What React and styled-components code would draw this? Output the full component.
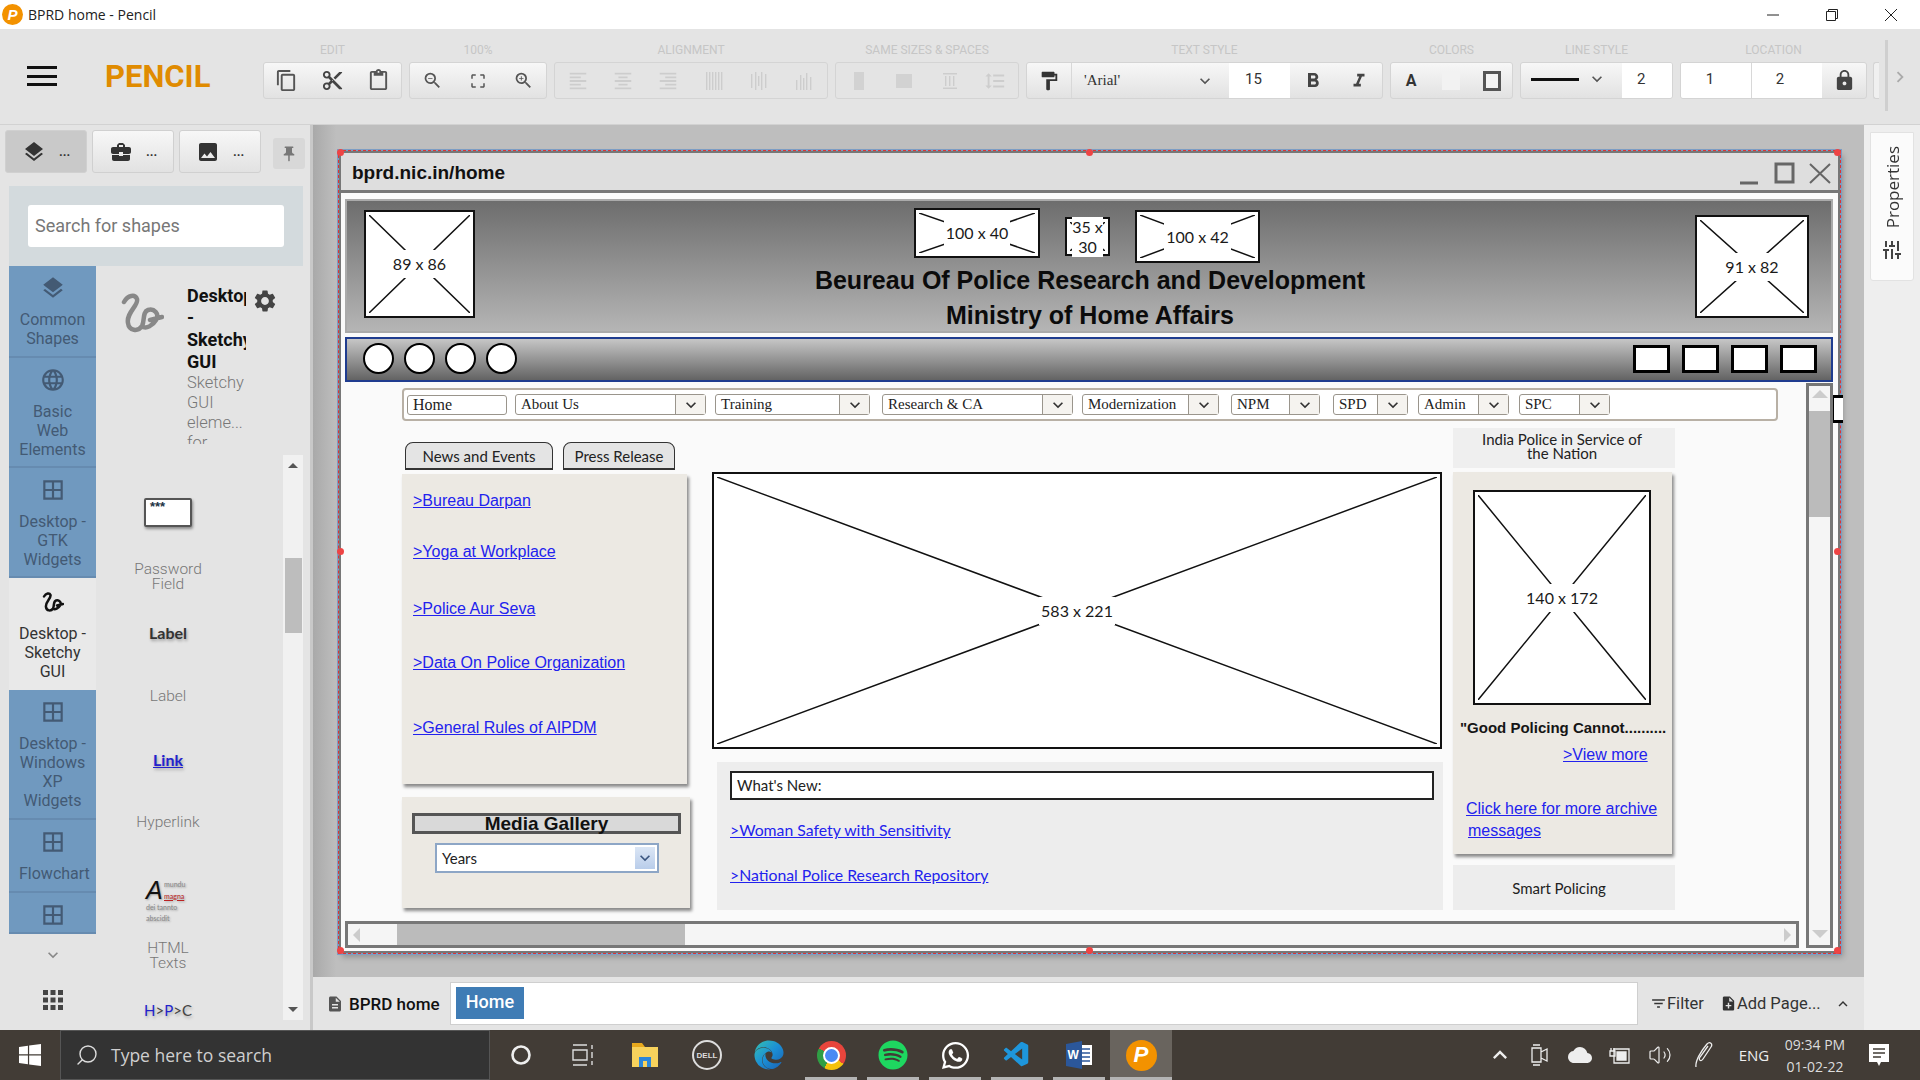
import React from "react"
import styled, { createGlobalStyle } from "styled-components"
import {
  MdContentCopy,
  MdContentCut,
  MdContentPaste,
  MdZoomOut,
  MdZoomIn,
  MdCropFree,
  MdFormatAlignLeft,
  MdFormatAlignCenter,
  MdFormatAlignRight,
  MdFormatBold,
  MdFormatItalic,
  MdFormatPaint,
  MdLock,
  MdLayers,
  MdBusinessCenter,
  MdImage,
  MdPushPin,
  MdLanguage,
  MdBorderAll,
  MdSettings,
  MdApps,
  MdKeyboardArrowDown,
  MdKeyboardArrowRight,
  MdKeyboardArrowUp,
  MdDescription,
  MdNoteAdd,
  MdFilterList,
  MdExpandLess,
  MdTune,
  MdCloud,
  MdFormatLineSpacing,
} from "react-icons/md"
import { FaSpotify, FaWhatsapp, FaEdge } from "react-icons/fa"
import { VscVscode } from "react-icons/vsc"
import { Search, Volume2 } from "lucide-react"

const GlobalStyle = createGlobalStyle`
  html, body { margin: 0; padding: 0; background: #fff; }
  * { box-sizing: border-box; }
`

const sketch = `"Lato", "Open Sans", sans-serif`
const arial = `"Liberation Sans", Arial, sans-serif`
const serif = `"Liberation Serif", "Times New Roman", serif`
const roboto = `Roboto, "Open Sans", sans-serif`

const Page = styled.div`
  width: 1920px;
  height: 1080px;
  overflow: hidden;
  display: flex;
  flex-direction: column;
  font-family: ${roboto};
  background: #e4e4e4;
`

/* window title */
const TitleBar = styled.div`
  height: 29px;
  background: #fff;
  display: flex;
  align-items: center;
  padding-left: 2px;
`

const LogoDot = styled.span`
  width: ${(p) => p.$size}px;
  height: ${(p) => p.$size}px;
  border-radius: 50%;
  background: #f39200;
  color: #fff;
  font: italic bold ${(p) => p.$size * 0.72}px ${arial};
  display: flex;
  align-items: center;
  justify-content: center;
`

const TitleText = styled.span`
  font: 14px "Open Sans", sans-serif;
  color: #222;
  margin-left: 5px;
  flex: 1;
`

const WinButton = styled.span`
  width: 59px;
  height: 29px;
  display: flex;
  align-items: center;
  justify-content: center;
`

/* toolbar */
const Toolbar = styled.div`
  height: 96px;
  background: #e4e4e4;
  display: flex;
  align-items: flex-start;
  border-bottom: 1px solid #d2d2d2;
`

const Burger = styled.div`
  width: 30px;
  margin: 37px 0 0 27px;
  height: 20px;
  display: flex;
  flex-direction: column;
  justify-content: space-between;
  span {
    height: 3px;
    background: #111;
  }
`

const Brand = styled.div`
  width: 158px;
  margin: 32px 0 0 48px;
  font: bold 31px ${roboto};
  color: #e08b00;
  line-height: 32px;
`

const GroupList = styled.div`
  display: flex;
  gap: 7px;
`

const GroupCol = styled.div`
  width: ${(p) => p.$w}px;
`

const GroupLabel = styled.div`
  height: 33px;
  padding-top: 15px;
  text-align: center;
  font: 12px/12px ${roboto};
  color: #c6c6c6;
  white-space: nowrap;
`

const GroupBox = styled.div`
  height: 37px;
  display: flex;
  border: 1px solid #d4d4d4;
  border-radius: 3px;
  overflow: hidden;
  background: ${(p) => (p.$off ? "#e4e4e4" : "linear-gradient(#f7f7f7, #e2e2e2)")};
  color: ${(p) => (p.$off ? "#cdcdcd" : "#4a4a4a")};
`

const Cell = styled.div`
  flex: ${(p) => (p.$w ? "none" : 1)};
  width: ${(p) => (p.$w ? `${p.$w}px` : "auto")};
  display: flex;
  align-items: center;
  justify-content: ${(p) => p.$justify || "center"};
  padding: ${(p) => p.$pad || 0};
  font: ${(p) => p.$font || `15px ${roboto}`};
  color: #333;
  background: ${(p) => (p.$white ? "#fff" : "transparent")};
  border-right: ${(p) => (p.$line ? "1px solid #d8d8d8" : "none")};
`

const OffIcon = styled.span`
  display: flex;
  color: #cdcdcd;
`

const Swatch = styled.span`
  width: ${(p) => p.$w}px;
  height: ${(p) => p.$h}px;
  background: ${(p) => p.$bg};
  border: ${(p) => p.$border || "none"};
`

const LineChevron = styled.span`
  display: flex;
  margin-left: 8px;
  color: #555;
`

const SideRule = styled.div`
  width: 3px;
  height: 71px;
  margin: 11px 0 0 6px;
  background: #cfcfcf;
`

const NextStub = styled.div`
  width: 6px;
  height: 37px;
  margin: 33px 0 0 6px;
  border: 1px solid #d4d4d4;
  border-right: none;
  border-radius: 3px 0 0 3px;
  background: #f0f0f0;
`

const NextArrow = styled.div`
  margin: 37px 0 0 1px;
  color: #aaa;
  display: flex;
`

/* body */
const Main = styled.div`
  flex: 1;
  display: flex;
  min-height: 0;
`

const LeftPanel = styled.div`
  width: 313px;
  background: #e4e4e4;
  border-right: 3px solid #c8c8c8;
`

const CollTabs = styled.div`
  display: flex;
  gap: 5px;
  padding: 5px 0 0 5px;
  height: 61px;
`

const CollTab = styled.div`
  width: 82px;
  height: 43px;
  border: 1px solid #d0d0d0;
  border-radius: 3px;
  background: ${(p) => (p.$on ? "#c9c9c9" : "linear-gradient(#f7f7f7, #e2e2e2)")};
  display: flex;
  align-items: center;
  padding-left: 16px;
  color: #333;
  gap: 13px;
  font: bold 13px ${roboto};
`

const PinBox = styled.div`
  width: 32px;
  height: 31px;
  margin: 8px 0 0 7px;
  border-radius: 3px;
  background: #d8d8d8;
  display: flex;
  align-items: center;
  justify-content: center;
  color: #777;
`

const SearchZone = styled.div`
  margin-left: 9px;
  width: 294px;
  height: 80px;
  background: #d3dadd;
  padding: 19px;
`

const SearchBox = styled.div`
  width: 256px;
  height: 42px;
  background: #fff;
  border-radius: 3px;
  padding-left: 7px;
  font: 18px/42px ${roboto};
  color: #777;
`

const PanelBody = styled.div`
  display: flex;
  margin-left: 9px;
`

const Rail = styled.div`
  width: 87px;
  display: flex;
  flex-direction: column;
  align-items: stretch;
`

const RailItem = styled.div`
  height: ${(p) => p.$h}px;
  background: ${(p) => (p.$on ? "#e9e9e9" : "#7099bf")};
  box-shadow: inset 0 -2px 0 rgba(70, 100, 130, ${(p) => (p.$on ? 0 : 0.25)});
  color: ${(p) => (p.$on ? "#333" : "#435a74")};
  padding: ${(p) => (p.$on ? 13 : 9)}px 10px 0;
  text-align: center;
  font: 16px/19px ${roboto};
  overflow: hidden;
  svg {
    display: block;
    margin: 0 auto ${(p) => (p.$on ? 11 : 9)}px;
  }
`

const RailMore = styled.div`
  height: 41px;
  display: flex;
  align-items: center;
  justify-content: center;
  color: #888;
`

const RailGrid = styled.div`
  height: 50px;
  display: flex;
  align-items: center;
  justify-content: center;
  color: #444;
`

const PanelRight = styled.div`
  width: 207px;
`

const CollHead = styled.div`
  height: 189px;
  display: flex;
  padding: 19px 0 0 24px;
`

const CollIcon = styled.div`
  width: 67px;
  padding-top: 6px;
`

const CollText = styled.div`
  width: 59px;
  height: 159px;
  overflow: hidden;
`

const CollTitle = styled.div`
  font: bold 18px/22px ${roboto};
  color: #111;
  white-space: pre;
`

const CollDesc = styled.div`
  font: 300 16.5px/20px ${roboto};
  color: #777;
  white-space: pre;
`

const GearWrap = styled.div`
  color: #444;
  margin: 3px 0 0 6px;
`

const ShapeRow = styled.div`
  display: flex;
`

const ShapeList = styled.div`
  width: 144px;
  height: 565px;
  margin-right: 43px;
  display: flex;
  flex-direction: column;
  align-items: center;
`

const PasswordIcon = styled.div`
  width: 48px;
  height: 30px;
  margin-top: 43px;
  background: #fff;
  border: 2px solid #555;
  border-radius: 2px;
  box-shadow: 1px 2px 3px rgba(0, 0, 0, 0.4);
  padding-left: 4px;
  font: bold 13px/13px ${arial};
  color: #234;
`

const ShapeName = styled.div`
  margin-top: ${(p) => p.$top}px;
  font: 300 15.5px/15px ${roboto};
  color: #777;
  text-align: center;
`

const SketchLabel = styled.div`
  margin-top: ${(p) => p.$top}px;
  height: 20px;
  font: bold 16px/20px ${sketch};
  color: ${(p) => p.$color || "#333"};
  text-decoration: ${(p) => (p.$link ? "underline" : "none")};
  text-shadow: 1px 2px 3px rgba(0, 0, 0, 0.3);
`

const HtmlPreview = styled.div`
  width: 44px;
  height: 45px;
  margin-top: 49px;
  font: 7px/11px ${sketch};
  color: #888;
  text-shadow: 1px 1px 2px rgba(0, 0, 0, 0.3);
  display: grid;
  grid-template-columns: 18px 1fr;
  white-space: nowrap;
  b {
    grid-row: span 2;
    font: italic 25px/23px ${arial};
    color: #111;
  }
  em {
    font-style: normal;
  }
  i {
    font-style: normal;
    color: #b22;
    text-decoration: underline;
  }
  span {
    grid-column: span 2;
  }
`

const Crumbs = styled.div`
  margin-top: ${(p) => p.$top}px;
  height: 20px;
  font: 15px/20px ${sketch};
  color: #22c;
  text-shadow: 1px 2px 3px rgba(0, 0, 0, 0.25);
  span {
    color: #444;
  }
`

const PanelBar = styled.div`
  width: 20px;
  height: 565px;
  background: #f1f1f1;
  display: flex;
  flex-direction: column;
  align-items: center;
  justify-content: space-between;
  padding: 8px 0;
  position: relative;
`

const PanelThumb = styled.div`
  position: absolute;
  top: 103px;
  left: 2px;
  width: 17px;
  height: 75px;
  background: #bdbdbd;
`

const Tri = styled.span`
  width: 0;
  height: 0;
  border-left: ${(p) => p.$s}px solid transparent;
  border-right: ${(p) => p.$s}px solid transparent;
  border-${(p) => (p.$up ? "bottom" : "top")}: ${(p) => p.$s}px solid ${(p) => p.$c || "#555"};
`

const TriSide = styled.span`
  width: 0;
  height: 0;
  border-top: 7px solid transparent;
  border-bottom: 7px solid transparent;
  border-${(p) => (p.$left ? "right" : "left")}: 7px solid #ccc;
`

/* canvas */
const CanvasCol = styled.div`
  width: 1551px;
  display: flex;
  flex-direction: column;
`

const Canvas = styled.div`
  height: 852px;
  background: linear-gradient(90deg, #a9a9a9, #bebebe 1.5%, #bebebe);
  padding: 26px 0 0 26px;
`

const DrawWindow = styled.div`
  position: relative;
  width: 1501px;
  height: 802px;
  background: #fafafa;
  border: 2px solid #777;
  outline: 1px dashed #d33;
  box-shadow: 0 0 0 2px #7c9dc4, 3px 4px 6px rgba(0, 0, 0, 0.25);
`

const Handle = styled.span`
  position: absolute;
  left: ${(p) => p.$x}%;
  top: ${(p) => p.$y}%;
  width: 7px;
  height: 7px;
  margin: -4px;
  background: #ee4444;
  border-radius: 50%;
`

const SideHandle = styled.div`
  position: absolute;
  left: 1490px;
  top: 242px;
  width: 12px;
  height: 28px;
  background: #fff;
  border: 3px solid #000;
  border-right: none;
`

const WinTitle = styled.div`
  height: 40px;
  background: #dedede;
  border-bottom: 3px solid #777;
  display: flex;
  align-items: center;
  padding: 2px 6px 0 11px;
  font: bold 19px ${arial};
  color: #111;
`

const WinTitleText = styled.span`
  flex: 1;
`

const WinBody = styled.div`
  padding: 6px 5px 0 4px;
`

const Banner = styled.div`
  height: 134px;
  display: flex;
  align-items: flex-start;
  border: 2px solid #aaa;
  background: linear-gradient(#6d6d6d, #b5b5b5);
`

const BannerCenter = styled.div`
  flex: 1;
  padding-left: 10px;
`

const BannerImages = styled.div`
  height: 62px;
  display: flex;
  justify-content: center;
  align-items: flex-start;
  gap: 25px;
  padding-right: 6px;
`

const BannerHeading = styled.div`
  text-align: center;
  font: bold 25px/35px ${arial};
  color: #0b0b0b;
`

const Placeholder = styled.div`
  position: relative;
  flex: none;
  width: ${(p) => p.$w}px;
  height: ${(p) => p.$h}px;
  margin: ${(p) => p.$m || 0};
  background: #fff;
  border: 2px solid #111;
  display: flex;
  align-items: center;
  justify-content: center;
`

const CrossSvg = styled.svg`
  position: absolute;
  inset: 3px;
  width: calc(100% - 6px);
  height: calc(100% - 6px);
`

const PlaceLabel = styled.span`
  position: relative;
  background: #fff;
  padding: ${(p) => (p.$tight ? 0 : "5px 2px")};
  font: ${(p) => p.$size || 16}px/${(p) => p.$lh || 18}px ${sketch};
  color: #1a1a1a;
  text-align: center;
`

const Cross = () => (
  <CrossSvg viewBox="0 0 100 100" preserveAspectRatio="none">
    <path d="M0 0L100 100M100 0L0 100" stroke="#111" strokeWidth="1.5" vectorEffect="non-scaling-stroke" fill="none" />
  </CrossSvg>
)

const Image = ({ w, h, m, label, size, lh, tight }) => (
  <Placeholder $w={w} $h={h} $m={m}>
    <Cross />
    <PlaceLabel $size={size} $lh={lh} $tight={tight}>{label}</PlaceLabel>
  </Placeholder>
)

const NavStrip = styled.div`
  height: 45px;
  margin-top: 4px;
  border: 2px solid #1f3c8f;
  background: linear-gradient(#c6c6c6, #636363);
  display: flex;
  align-items: center;
  padding: 0 0 2px 16px;
`

const Circle = styled.span`
  width: 31px;
  height: 31px;
  border-radius: 50%;
  background: #fff;
  border: 2px solid #000;
  margin-right: 10px;
`

const SquareGroup = styled.div`
  margin-left: auto;
  display: flex;
  gap: 12px;
  padding-right: 14px;
`

const Square = styled.span`
  width: 37px;
  height: 28px;
  background: #fff;
  border: 3px solid #000;
`

const ScrollArea = styled.div`
  display: flex;
  gap: 7px;
  height: 566px;
  margin-top: 1px;
`

const PageCol = styled.div`
  width: 1455px;
`

const PageContent = styled.div`
  height: 538px;
  padding: 5px 0 0 57px;
  overflow: hidden;
`

const MenuBar = styled.div`
  width: 1376px;
  height: 33px;
  border: 2px solid #b8b0a5;
  border-radius: 4px;
  background: #fff;
  display: flex;
  align-items: center;
  padding-left: 3px;
`

const MenuHome = styled.div`
  width: 100px;
  height: 20px;
  margin-right: 8px;
  border: 1px solid #9a958c;
  border-radius: 3px;
  padding-left: 5px;
  font: 16px/18px ${serif};
  color: #222;
`

const MenuCombo = styled.div`
  width: ${(p) => p.$w}px;
  height: 21px;
  margin-right: ${(p) => p.$gap}px;
  flex: none;
  border: 1px solid #9a958c;
  border-radius: 3px;
  display: flex;
  font: 15px/19px ${serif};
  color: #222;
  span {
    flex: 1;
    padding-left: 5px;
    white-space: nowrap;
  }
  i {
    width: 30px;
    border-left: 1px solid #9a958c;
    background: #f5f3ef;
    display: flex;
    align-items: center;
    justify-content: center;
    color: #333;
  }
`

const Columns = styled.div`
  display: flex;
  margin-top: 7px;
`

const LeftCol = styled.div`
  width: 288px;
  padding-top: 14px;
  margin-right: 22px;
`

const Tabs = styled.div`
  display: flex;
  gap: 10px;
  padding-left: 3px;
  height: 32px;
`

const Tab = styled.div`
  width: ${(p) => p.$w}px;
  height: 28px;
  background: #e4e4e4;
  border: 1px solid #333;
  border-bottom: 2px solid #333;
  border-radius: 8px 8px 0 0;
  text-align: center;
  font: 15px/26px ${sketch};
  color: #222;
`

const NewsPanel = styled.div`
  width: 285px;
  height: 310px;
  background: #ece9e3;
  box-shadow: 2px 3px 3px rgba(0, 0, 0, 0.45);
  padding: 17px 0 0 11px;
  display: flex;
  flex-direction: column;
  align-items: flex-start;
`

const Anchor = styled.a`
  margin-top: ${(p) => p.$top || 0}px;
  margin-left: ${(p) => p.$left || 0}px;
  font: ${(p) => p.$size || 16}px/${(p) => p.$lh || 20}px ${(p) => p.$font || arial};
  color: #2222ee;
  text-decoration: underline;
`

const MediaPanel = styled.div`
  width: 288px;
  height: 111px;
  margin-top: 13px;
  background: #ece9e3;
  box-shadow: 2px 3px 3px rgba(0, 0, 0, 0.45);
  padding: 16px 0 0 10px;
`

const MediaHead = styled.div`
  width: 269px;
  height: 21px;
  background: #d9d9d9;
  border: 3px solid #555;
  text-align: center;
  font: bold 19px/15px ${arial};
  color: #111;
`

const SelectBox = styled.div`
  width: 224px;
  height: 30px;
  margin: 9px 0 0 23px;
  background: #fff;
  border: 2px solid #8da6c6;
  display: flex;
  align-items: center;
  justify-content: space-between;
  padding: 2px 2px 2px 5px;
  font: 15px ${sketch};
  color: #222;
`

const SelectBtn = styled.span`
  width: 20px;
  height: 100%;
  background: linear-gradient(#dbe6f5, #b9cdea);
  display: flex;
  align-items: center;
  justify-content: center;
  color: #3b5680;
`

const CenterCol = styled.div`
  width: 731px;
  padding-top: 44px;
  margin-right: 10px;
`

const NewsBox = styled.div`
  width: 726px;
  height: 148px;
  margin: 13px 0 0 5px;
  background: #ededed;
  padding: 9px 0 0 13px;
  display: flex;
  flex-direction: column;
  align-items: flex-start;
`

const WhatsNew = styled.div`
  width: 704px;
  height: 29px;
  background: #fff;
  border: 2px solid #222;
  padding-left: 5px;
  font: 15px/24px ${sketch};
  color: #222;
`

const RightCol = styled.div`
  width: 222px;
`

const CaptionBox = styled.div`
  height: ${(p) => p.$h}px;
  margin-top: ${(p) => p.$top || 0}px;
  background: ${(p) => p.$bg};
  display: flex;
  align-items: center;
  justify-content: center;
  text-align: center;
  font: 15px/14px ${sketch};
  color: #222;
  padding: 0 ${(p) => p.$right || 28}px ${(p) => p.$bottom || 0}px 24px;
`

const QuotePanel = styled.div`
  width: 219px;
  height: 382px;
  margin-top: 4px;
  background: #ece9e3;
  box-shadow: 2px 3px 3px rgba(0, 0, 0, 0.45);
  padding-top: 18px;
  display: flex;
  flex-direction: column;
  align-items: flex-start;
`

const Quote = styled.div`
  margin: 13px 0 0 7px;
  font: bold 15px/20px ${arial};
  color: #151515;
  white-space: nowrap;
`

const HScroll = styled.div`
  height: 27px;
  border: 3px solid #777;
  background: #f5f5f5;
  display: flex;
  align-items: center;
  padding-left: 5px;
`

const HThumb = styled.div`
  width: 288px;
  height: 100%;
  margin: 0 auto 0 37px;
  background: #bbb;
`

const HEnd = styled.div`
  margin-right: 5px;
  display: flex;
`

const VScroll = styled.div`
  width: 27px;
  height: 565px;
  border: 3px solid #777;
  background: #f5f5f5;
  display: flex;
  flex-direction: column;
  align-items: center;
  justify-content: space-between;
  padding: 4px 0 7px;
  position: relative;
`

const VThumb = styled.div`
  position: absolute;
  top: 25px;
  left: 0;
  right: 0;
  height: 106px;
  background: #bbb;
`

/* page tabs */
const PageBar = styled.div`
  height: 53px;
  background: #e4e4e4;
  display: flex;
  align-items: center;
  padding-left: 13px;
`

const DocName = styled.div`
  width: 124px;
  display: flex;
  align-items: center;
  gap: 5px;
  font: 500 17px ${roboto};
  color: #111;
  svg {
    color: #555;
  }
`

const PageTabs = styled.div`
  width: 1188px;
  height: 43px;
  background: #fff;
  border: 1px solid #cfcfcf;
  padding: 4px 5px;
`

const PageTab = styled.div`
  width: 68px;
  height: 32px;
  background: #3f7cb5;
  color: #fff;
  text-align: center;
  font: 500 18px/30px ${roboto};
`

const PageAction = styled.div`
  display: flex;
  align-items: center;
  margin-left: ${(p) => p.$left}px;
  font: 16.5px ${roboto};
  color: #333;
`

const RightDock = styled.div`
  flex: 1;
  background: #eeeeee;
  padding: 7px 0 0 6px;
`

const DockTab = styled.div`
  width: 44px;
  height: 149px;
  background: #fbfbfb;
  border: 1px solid #e2e2e2;
  border-radius: 0 0 3px 3px;
  display: flex;
  flex-direction: column;
  align-items: center;
  padding-top: 13px;
  color: #444;
  svg {
    transform: rotate(90deg);
  }
`

const DockLabel = styled.span`
  writing-mode: vertical-rl;
  transform: rotate(180deg);
  font: 17px "Open Sans", sans-serif;
  color: #333;
  margin-bottom: 10px;
`

/* taskbar */
const Taskbar = styled.div`
  height: 50px;
  background: #423c36;
  display: flex;
  align-items: stretch;
`

const StartBtn = styled.div`
  width: 60px;
  display: flex;
  align-items: center;
  justify-content: center;
`

const TaskSearch = styled.div`
  width: 430px;
  background: #333333;
  border: 1px solid #555;
  display: flex;
  align-items: center;
  padding-left: 14px;
  gap: 12px;
  font: 17.5px "Open Sans", sans-serif;
  color: #cfcfcf;
  svg {
    transform: scaleX(-1);
  }
`

const TaskApp = styled.div`
  width: 62px;
  position: relative;
  display: flex;
  align-items: center;
  justify-content: center;
  background: ${(p) => (p.$on ? "#69645e" : "transparent")};
  color: ${(p) => p.$color || "#fff"};
  &::after {
    content: "";
    display: ${(p) => (p.$open ? "block" : "none")};
    position: absolute;
    left: ${(p) => (p.$on ? 0 : 5)}px;
    right: ${(p) => (p.$on ? 0 : 5)}px;
    bottom: 0;
    height: 3px;
    background: #b4b4b4;
  }
`

const TrayArea = styled.div`
  margin-left: auto;
  display: flex;
  padding-right: 14px;
`

const TrayItem = styled.div`
  width: ${(p) => p.$w || 40}px;
  display: flex;
  align-items: center;
  justify-content: center;
  color: #eee;
  font: 15px "Open Sans", sans-serif;
`

const Clock = styled.div`
  width: 74px;
  text-align: center;
  padding-top: 4px;
  font: 14px/22px "Open Sans", sans-serif;
  color: #ddd;
`

const ChromeRing = styled.span`
  width: 29px;
  height: 29px;
  border-radius: 50%;
  background: conic-gradient(#e8453c 0deg 125deg, #f4c20d 125deg 210deg, #2f9e44 210deg 300deg, #e8453c 300deg);
  display: flex;
  align-items: center;
  justify-content: center;
  &::after {
    content: "";
    width: 13px;
    height: 13px;
    border-radius: 50%;
    background: #4a8af4;
    border: 2px solid #fff;
  }
`

const DellMark = styled.span`
  width: 30px;
  height: 30px;
  border-radius: 50%;
  border: 2px solid #ddd;
  display: flex;
  align-items: center;
  justify-content: center;
  font: bold 8px ${arial};
  color: #ddd;
`

const HiddenDefs = styled.svg`
  position: absolute;
`

const Squiggle = ({ size, color, width = 5 }) => (
  <svg width={size} height={size} viewBox="0 0 44 44" fill="none">
    <path
      d="M4 11C8 4 15 3 17 8C19 14 6 22 8 32C9 40 18 41 22 35C25 30 22 21 28 19C34 17 40 23 36 29C33 34 26 39 22 35M30 29L42 26"
      stroke={color}
      strokeWidth={width}
      strokeLinecap="round"
      strokeLinejoin="round"
    />
  </svg>
)

const Bars = ({ kind }) => (
  <svg width="20" height="20" viewBox="0 0 20 20" fill="#cdcdcd">
    {kind === "v" && <path d="M2 1h1.4v18H2zM5 1h1.4v18H5zM8 1h1.4v18H8zM11 1h1.4v18H11zM14 1h1.4v18H14zM17 1h1.4v18H17z" />}
    {kind === "c" && <path d="M2 3h1.4v14H2zM6 1h1.4v18H6zM9 5h1.4v10H9zM12 1h1.4v18H12zM16 3h1.4v14H16z" />}
    {kind === "b" && <path d="M2 9h1.4v10H2zM6 4h1.4v15H6zM9 7h1.4v12H9zM12 2h1.4v17H12zM16 6h1.4v13H16z" />}
    {kind === "h" && <path d="M5 1h10v18H5z" opacity=".8" />}
    {kind === "w" && <path d="M2 3h16v14H2z" opacity=".8" />}
    {kind === "s" && <path d="M3 2h14v1.4H3zM3 16.6h14V18H3zM5 5h1.4v10H5zM9 5h1.4v10H9zM13 5h1.4v10H13z" />}
  </svg>
)

const Group = ({ label, w, off, children }) => (
  <GroupCol $w={w}>
    <GroupLabel>{label}</GroupLabel>
    <GroupBox $off={off}>{children}</GroupBox>
  </GroupCol>
)

const railTop = [
  { h: 92, icon: <MdLayers size={26} />, text: "Common Shapes" },
  { h: 110, icon: <MdLanguage size={26} />, text: "Basic Web Elements" },
  { h: 110, icon: <MdBorderAll size={26} />, text: "Desktop - GTK Widgets" },
  { h: 112, icon: <Squiggle size={22} color="#111" width={5} />, text: "Desktop - Sketchy GUI", on: true },
  { h: 130, icon: <MdBorderAll size={26} />, text: "Desktop - Windows XP Widgets" },
  { h: 73, icon: <MdBorderAll size={26} />, text: "Flowchart" },
  { h: 41, icon: <MdBorderAll size={26} />, text: "" },
]

const menus = [
  { label: "About Us", w: 191, gap: 9 },
  { label: "Training", w: 155, gap: 12 },
  { label: "Research & CA", w: 191, gap: 9 },
  { label: "Modernization", w: 137, gap: 12 },
  { label: "NPM", w: 89, gap: 13 },
  { label: "SPD", w: 75, gap: 10 },
  { label: "Admin", w: 91, gap: 10 },
  { label: "SPC", w: 91, gap: 0 },
]

const newsLinks = [
  { text: ">Bureau Darpan", top: 0 },
  { text: ">Yoga at Workplace", top: 31 },
  { text: ">Police Aur Seva", top: 37 },
  { text: ">Data On Police Organization", top: 34 },
  { text: ">General Rules of AIPDM", top: 45 },
]

const handles = [
  [0, 0],
  [50, 0],
  [100, 0],
  [0, 50],
  [100, 50],
  [0, 100],
  [50, 100],
  [100, 100],
]

const App = () => {
  return (
    <Page>
      <GlobalStyle />
      <HiddenDefs width="0" height="0">
        <defs>
          <linearGradient id="edgeFill" x1="0" y1="0" x2="1" y2="1">
            <stop offset="0" stopColor="#35c1b0" />
            <stop offset="0.5" stopColor="#1b8fd6" />
            <stop offset="1" stopColor="#1b5fae" />
          </linearGradient>
        </defs>
      </HiddenDefs>

      <TitleBar>
        <LogoDot $size={21}>P</LogoDot>
        <TitleText>BPRD home - Pencil</TitleText>
        <WinButton>
          <svg width="12" height="12" viewBox="0 0 12 12"><path d="M0 6h12" stroke="#222" strokeWidth="1" /></svg>
        </WinButton>
        <WinButton>
          <svg width="12" height="12" viewBox="0 0 12 12" fill="none" stroke="#222"><path d="M.5 2.5h9v9h-9zM2.5 2.5v-2h9v9h-2" /></svg>
        </WinButton>
        <WinButton>
          <svg width="14" height="14" viewBox="0 0 14 14" stroke="#222"><path d="M1 1l12 12M13 1L1 13" /></svg>
        </WinButton>
      </TitleBar>

      <Toolbar>
        <Burger><span /><span /><span /></Burger>
        <Brand>PENCIL</Brand>
        <GroupList>
          <Group label="EDIT" w={139}>
            <Cell><MdContentCopy size={23} color="#555" /></Cell>
            <Cell><MdContentCut size={23} color="#444" /></Cell>
            <Cell><MdContentPaste size={23} color="#555" /></Cell>
          </Group>
          <Group label="100%" w={138}>
            <Cell><MdZoomOut size={21} color="#555" /></Cell>
            <Cell><MdCropFree size={18} color="#555" /></Cell>
            <Cell><MdZoomIn size={21} color="#555" /></Cell>
          </Group>
          <Group label="ALIGNMENT" w={274} off>
            <Cell><OffIcon><MdFormatAlignLeft size={22} /></OffIcon></Cell>
            <Cell><OffIcon><MdFormatAlignCenter size={22} /></OffIcon></Cell>
            <Cell><OffIcon><MdFormatAlignRight size={22} /></OffIcon></Cell>
            <Cell><Bars kind="v" /></Cell>
            <Cell><Bars kind="c" /></Cell>
            <Cell><Bars kind="b" /></Cell>
          </Group>
          <Group label="SAME SIZES & SPACES" w={184} off>
            <Cell><Bars kind="h" /></Cell>
            <Cell><Bars kind="w" /></Cell>
            <Cell><Bars kind="s" /></Cell>
            <Cell><OffIcon><MdFormatLineSpacing size={22} /></OffIcon></Cell>
          </Group>
          <Group label="TEXT STYLE" w={357}>
            <Cell $w={45} $line><MdFormatPaint size={22} color="#333" /></Cell>
            <Cell $w={157} $justify="space-between" $pad="0 14px 0 12px" $font={`15px ${serif}`}>
              'Arial'
              <MdKeyboardArrowDown size={20} color="#555" />
            </Cell>
            <Cell $w={61} $white $font={`15px ${roboto}`} $justify="flex-start" $pad="0 0 3px 16px">15</Cell>
            <Cell><MdFormatBold size={24} color="#444" /></Cell>
            <Cell><MdFormatItalic size={22} color="#444" /></Cell>
          </Group>
          <Group label="COLORS" w={123}>
            <Cell $font={`bold 16px ${roboto}`}>A</Cell>
            <Cell><Swatch $w={18} $h={19} $bg="#f2f2f2" /></Cell>
            <Cell><Swatch $w={18} $h={20} $bg="#f4f4f4" $border="3px solid #555" /></Cell>
          </Group>
          <Group label="LINE STYLE" w={153}>
            <Cell $w={101} $justify="flex-start" $pad="0 0 3px 10px">
              <Swatch $w={48} $h={3} $bg="#111" />
              <LineChevron><MdKeyboardArrowDown size={20} /></LineChevron>
            </Cell>
            <Cell $white $justify="flex-start" $pad="0 0 3px 15px">2</Cell>
          </Group>
          <Group label="LOCATION" w={187}>
            <Cell $w={71} $white $line $pad="0 12px 3px 0">1</Cell>
            <Cell $w={70} $white $pad="0 14px 3px 0">2</Cell>
            <Cell><MdLock size={23} color="#444" /></Cell>
          </Group>
        </GroupList>
        <NextStub />
        <SideRule />
        <NextArrow><MdKeyboardArrowRight size={22} /></NextArrow>
      </Toolbar>

      <Main>
        <LeftPanel>
          <CollTabs>
            <CollTab $on><MdLayers size={24} />...</CollTab>
            <CollTab><MdBusinessCenter size={24} />...</CollTab>
            <CollTab><MdImage size={24} />...</CollTab>
            <PinBox><MdPushPin size={18} /></PinBox>
          </CollTabs>
          <SearchZone>
            <SearchBox>Search for shapes</SearchBox>
          </SearchZone>
          <PanelBody>
            <Rail>
              {railTop.map((item, i) => (
                <RailItem key={i} $h={item.h} $on={item.on}>
                  {item.icon}
                  {item.text}
                </RailItem>
              ))}
              <RailMore><MdKeyboardArrowDown size={20} /></RailMore>
              <RailGrid><MdApps size={30} /></RailGrid>
            </Rail>
            <PanelRight>
              <CollHead>
                <CollIcon><Squiggle size={44} color="#888" width={4.5} /></CollIcon>
                <CollText>
                  <CollTitle>{"Desktop\n-\nSketchy\nGUI"}</CollTitle>
                  <CollDesc>{"Sketchy\nGUI\neleme...\nfor"}</CollDesc>
                </CollText>
                <GearWrap><MdSettings size={26} /></GearWrap>
              </CollHead>
              <ShapeRow>
                <ShapeList>
                  <PasswordIcon>***</PasswordIcon>
                  <ShapeName $top={35}>Password<br />Field</ShapeName>
                  <SketchLabel $top={31}>Label</SketchLabel>
                  <ShapeName $top={46}>Label</ShapeName>
                  <SketchLabel $top={46} $link $color="#22c">Link</SketchLabel>
                  <ShapeName $top={45}>Hyperlink</ShapeName>
                  <HtmlPreview>
                    <b>A</b>
                    <em>mundu</em>
                    <i>magna</i>
                    <span>dei tannto</span>
                    <span>abscidit</span>
                  </HtmlPreview>
                  <ShapeName $top={17}>HTML<br />Texts</ShapeName>
                  <Crumbs $top={29}>H<span>&gt;</span>P<span>&gt;C</span></Crumbs>
                </ShapeList>
                <PanelBar>
                  <Tri $up $s={5} />
                  <PanelThumb />
                  <Tri $s={5} />
                </PanelBar>
              </ShapeRow>
            </PanelRight>
          </PanelBody>
        </LeftPanel>

        <CanvasCol>
          <Canvas>
            <DrawWindow>
              {handles.map(([x, y]) => (
                <Handle key={`${x}-${y}`} $x={x} $y={y} />
              ))}
              <SideHandle />
              <WinTitle>
                <WinTitleText>bprd.nic.in/home</WinTitleText>
                <svg width="94" height="24" viewBox="0 0 94 24" fill="none" stroke="#666">
                  <path d="M2 22h18" strokeWidth="3" />
                  <path d="M38 3h17v18H38z" strokeWidth="3" />
                  <path d="M72 3l20 19M92 3L72 22" strokeWidth="2" />
                </svg>
              </WinTitle>
              <WinBody>
                <Banner>
                  <Image w={111} h={108} m="9px 0 0 17px" label="89 x 86" />
                  <BannerCenter>
                    <BannerImages>
                      <Image w={126} h={50} m="7px 0 0" label="100 x 40" />
                      <Image w={45} h={39} m="16px 0 0" label={<>35 x<br />30</>} lh={20} tight />
                      <Image w={125} h={53} m="9px 0 0" label="100 x 42" />
                    </BannerImages>
                    <BannerHeading>
                      Beureau Of Police Research and Development
                      <br />
                      Ministry of Home Affairs
                    </BannerHeading>
                  </BannerCenter>
                  <Image w={114} h={103} m="14px 22px 0 0" label="91 x 82" />
                </Banner>
                <NavStrip>
                  <Circle />
                  <Circle />
                  <Circle />
                  <Circle />
                  <SquareGroup>
                    <Square />
                    <Square />
                    <Square />
                    <Square />
                  </SquareGroup>
                </NavStrip>
                <ScrollArea>
                  <PageCol>
                    <PageContent>
                      <MenuBar>
                        <MenuHome>Home</MenuHome>
                        {menus.map((m) => (
                          <MenuCombo key={m.label} $w={m.w} $gap={m.gap}>
                            <span>{m.label}</span>
                            <i><MdKeyboardArrowDown size={20} /></i>
                          </MenuCombo>
                        ))}
                      </MenuBar>
                      <Columns>
                        <LeftCol>
                          <Tabs>
                            <Tab $w={148}>News and Events</Tab>
                            <Tab $w={112}>Press Release</Tab>
                          </Tabs>
                          <NewsPanel>
                            {newsLinks.map((l) => (
                              <Anchor key={l.text} $top={l.top}>{l.text}</Anchor>
                            ))}
                          </NewsPanel>
                          <MediaPanel>
                            <MediaHead>Media Gallery</MediaHead>
                            <SelectBox>
                              Years
                              <SelectBtn><MdKeyboardArrowDown size={20} /></SelectBtn>
                            </SelectBox>
                          </MediaPanel>
                        </LeftCol>
                        <CenterCol>
                          <Image w={730} h={277} label="583 x 221" />
                          <NewsBox>
                            <WhatsNew>What's New:</WhatsNew>
                            <Anchor $top={20} $size={15.8} $lh={20} $font={sketch}>&gt;Woman Safety with Sensitivity</Anchor>
                            <Anchor $top={25} $size={15.8} $lh={20} $font={sketch}>&gt;National Police Research Repository</Anchor>
                          </NewsBox>
                        </CenterCol>
                        <RightCol>
                          <CaptionBox $h={40} $bottom={4} $bg="#efefef">India Police in Service of the Nation</CaptionBox>
                          <QuotePanel>
                            <Image w={178} h={215} m="0 0 0 20px" label="140 x 172" />
                            <Quote>"Good Policing Cannot..........</Quote>
                            <Anchor $top={7} $left={110}>&gt;View more</Anchor>
                            <Anchor $top={32} $lh={23} $left={13}>Click here for more archive</Anchor>
                            <Anchor $left={15} $lh={22}>messages</Anchor>
                          </QuotePanel>
                          <CaptionBox $h={45} $top={11} $right={34} $bg="#ededed">Smart Policing</CaptionBox>
                        </RightCol>
                      </Columns>
                    </PageContent>
                    <HScroll>
                      <TriSide $left />
                      <HThumb />
                      <HEnd><TriSide /></HEnd>
                    </HScroll>
                  </PageCol>
                  <VScroll>
                    <Tri $up $s={8} $c="#ccc" />
                    <VThumb />
                    <Tri $s={8} $c="#ccc" />
                  </VScroll>
                </ScrollArea>
              </WinBody>
            </DrawWindow>
          </Canvas>
          <PageBar>
            <DocName><MdDescription size={18} />BPRD home</DocName>
            <PageTabs><PageTab>Home</PageTab></PageTabs>
            <PageAction $left={12}><MdFilterList size={17} />Filter</PageAction>
            <PageAction $left={16}><MdNoteAdd size={17} />Add Page...</PageAction>
            <PageAction $left={13}><MdExpandLess size={18} /></PageAction>
          </PageBar>
        </CanvasCol>

        <RightDock>
          <DockTab>
            <DockLabel>Properties</DockLabel>
            <MdTune size={24} />
          </DockTab>
        </RightDock>
      </Main>

      <Taskbar>
        <StartBtn>
          <svg width="22" height="22" viewBox="0 0 18 18" fill="#fff">
            <path d="M0 2.5L7.3 1.4V8.4H0zM8.3 1.3L18 0V8.4H8.3zM0 9.4H7.3V16.5L0 15.5zM8.3 9.4H18V18L8.3 16.7z" />
          </svg>
        </StartBtn>
        <TaskSearch>
          <Search size={24} color="#ddd" strokeWidth={1.4} />
          Type here to search
        </TaskSearch>
        <TaskApp>
          <svg width="22" height="22" viewBox="0 0 22 22" fill="none" stroke="#eee" strokeWidth="2.6"><circle cx="11" cy="11" r="8.5" /></svg>
        </TaskApp>
        <TaskApp>
          <svg width="24" height="24" viewBox="0 0 24 24" fill="none" stroke="#ddd" strokeWidth="1.4">
            <path d="M2 2h14M2 22h14M2 7h14v10H2zM21 2v4M21 9v6M21 18v4" />
          </svg>
        </TaskApp>
        <TaskApp>
          <svg width="30" height="30" viewBox="0 0 30 30">
            <path d="M2 3h10l3 4H2z" fill="#e8a91d" />
            <path d="M2 7h26v20H2z" fill="#f7d25c" />
            <path d="M9 17h12v10H9z" fill="#2b86d9" />
            <path d="M13 21h4v6h-4z" fill="#f7d25c" />
          </svg>
        </TaskApp>
        <TaskApp><DellMark>DELL</DellMark></TaskApp>
        <TaskApp><FaEdge size={30} fill="url(#edgeFill)" /></TaskApp>
        <TaskApp $open><ChromeRing /></TaskApp>
        <TaskApp $open $color="#1ed760"><FaSpotify size={30} /></TaskApp>
        <TaskApp $open><FaWhatsapp size={31} /></TaskApp>
        <TaskApp $open $color="#1e96dc"><VscVscode size={30} /></TaskApp>
        <TaskApp $open>
          <svg width="30" height="30" viewBox="0 0 30 30">
            <path d="M12 5h16v20H12z" fill="#fff" />
            <path d="M16 9h10M16 13h10M16 17h10M16 21h10" stroke="#2b579a" strokeWidth="1.5" />
            <path d="M2 4l16-3v28L2 26z" fill="#2b579a" />
            <text x="3.5" y="19" fontFamily="Liberation Sans" fontWeight="bold" fontSize="12" fill="#fff">W</text>
          </svg>
        </TaskApp>
        <TaskApp $open $on><LogoDot $size={31}>P</LogoDot></TaskApp>
        <TrayArea>
          <TrayItem><MdKeyboardArrowUp size={28} /></TrayItem>
          <TrayItem>
            <svg width="20" height="26" viewBox="0 0 20 26" fill="none" stroke="#eee" strokeWidth="1.3">
              <path d="M2 6h9v14H2zM11 10l6-3v12l-6-3M3 3h7M3 23h7" />
            </svg>
          </TrayItem>
          <TrayItem><MdCloud size={24} /></TrayItem>
          <TrayItem>
            <svg width="22" height="22" viewBox="0 0 22 22" fill="none" stroke="#eee" strokeWidth="1.3">
              <path d="M5 5h15v14H5z" /><path d="M8 8h9v8H8z" fill="#eee" /><path d="M1 7h5v5H1zM2 4v3M5 4v3" />
            </svg>
          </TrayItem>
          <TrayItem><Volume2 size={24} strokeWidth={1.2} /></TrayItem>
          <TrayItem $w={50}>
            <svg width="24" height="28" viewBox="0 0 24 28" fill="none" stroke="#eee" strokeWidth="1.3">
              <path d="M3 26C2 20 8 10 14 3c3-3 6 0 4 3L10 18c-2 3-5 1-3-2l8-11" />
            </svg>
          </TrayItem>
          <TrayItem $w={48}>ENG</TrayItem>
          <Clock>09:34 PM<br />01-02-22</Clock>
          <TrayItem $w={54}>
            <svg width="22" height="24" viewBox="0 0 22 24">
              <path d="M1 1h20v18h-8l-2 4-2-4H1z" fill="#fff" />
              <path d="M5 6h12M5 10h12M5 14h8" stroke="#423c36" strokeWidth="1.4" />
            </svg>
          </TrayItem>
        </TrayArea>
      </Taskbar>
    </Page>
  )
}

export default App
